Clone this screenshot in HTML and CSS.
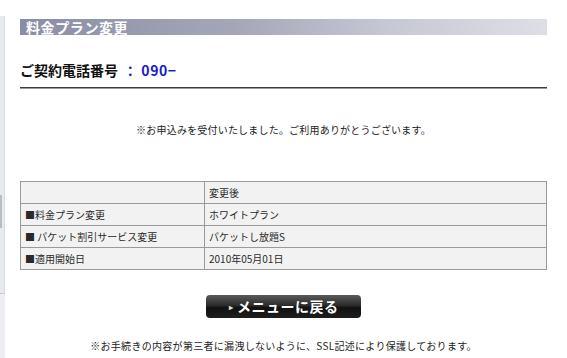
FILE: index.html
```html
<!DOCTYPE html>
<html lang="ja">
<head>
<meta charset="utf-8">
<link rel="stylesheet" href="styles.css">
</head>
<body>
<div class="page">
  <div class="side">
    <div class="side-top"></div>
    <div class="side-mark"></div>
    <div class="side-mid"></div>
    <div class="side-bottom"></div>
  </div>
  <div class="main">
    <div class="title">料金プラン変更</div>
    <div class="heading">ご契約電話番号 <span class="num">： 090−</span></div>
    <p class="msg">※お申込みを受付いたしました。ご利用ありがとうございます。</p>
    <table class="info">
      <tr><td class="c1"></td><td>変更後</td></tr>
      <tr><td class="c1">■料金プラン変更</td><td>ホワイトプラン</td></tr>
      <tr><td class="c1">■ パケット割引サービス変更</td><td>パケットし放題S</td></tr>
      <tr><td class="c1">■適用開始日</td><td>2010年05月01日</td></tr>
    </table>
    <div class="btn-row">
      <a class="btn"><span class="tri">▸</span>メニューに戻る</a>
    </div>
    <p class="foot">※お手続きの内容が第三者に漏洩しないように、SSL記述により保護しております。</p>
  </div>
</div>
</body>
</html>
```
FILE: styles.css
```css
html, body {
  margin: 0;
  padding: 0;
  background: #fff;
}
body {
  font-family: "Noto Sans CJK JP", "Noto Sans", sans-serif;
  color: #222;
}
.page {
  display: flex;
  width: 567px;
  height: 358px;
  overflow: hidden;
}
.side {
  width: 5px;
  display: flex;
  flex-direction: column;
  padding-top: 16px;
  margin-right: 15px;
}
.side-top {
  height: 179px;
  background: #e8ebee;
  border-right: 1px solid #d9dde2;
}
.side-mark {
  height: 33px;
  background: linear-gradient(to right, #b9bcc0 0, #b9bcc0 2px, #e8ebee 2px);
  border-right: 1px solid #d9dde2;
}
.side-mid {
  height: 65px;
  background: #e8ebee;
  border-right: 1px solid #d9dde2;
  border-bottom: 1px solid #c8ccd0;
}
.side-bottom {
  flex: 1;
  background: #eceef1;
}
.main {
  width: 527px;
  display: flex;
  flex-direction: column;
}
.title {
  margin-top: 19px;
  height: 16px;
  line-height: 16px;
  padding-left: 6px;
  background: linear-gradient(to right, #8b8da5 0%, #a4a6b8 40%, #c6c8d3 70%, #dedfe5 100%);
  color: #fff;
  font-size: 14px;
  font-weight: bold;
  letter-spacing: 0.6px;
}
.heading {
  margin-top: 25px;
  line-height: 20px;
  padding-bottom: 7px;
  border-bottom: 1px solid #3c3c3c;
  box-shadow: 0 1px 0 #9a9a9a;
  font-size: 14px;
  font-weight: bold;
  color: #111;
}
.num {
  color: #1a1acc;
  margin-left: 2px;
  letter-spacing: 0.5px;
}
.msg {
  margin: 35px 0 0;
  text-align: center;
  font-size: 10px;
  line-height: 14px;
  letter-spacing: 0.2px;
  color: #222;
}
.info {
  margin-top: 44px;
  width: 527px;
  border-collapse: collapse;
  background: #f2f2f2;
  font-size: 10px;
}
.info td {
  border: 1px solid #9a9a9a;
  height: 21px;
  padding: 0 0 0 4px;
  line-height: 14px;
  color: #2a2a2a;
}
.info .c1 {
  width: 179px;
}
.btn-row {
  margin-top: 25px;
  display: flex;
  justify-content: center;
}
.btn {
  width: 155px;
  height: 23px;
  border-radius: 4px;
  background: linear-gradient(to bottom, #5a5a5a 0%, #2c2c2c 45%, #111 55%, #1e1e1e 100%);
  color: #fff;
  font-size: 14px;
  font-weight: bold;
  line-height: 23px;
  display: flex;
  justify-content: center;
  align-items: center;
  letter-spacing: 0.5px;
}
.tri {
  font-size: 8px;
  margin-right: 4px;
  color: #ddd;
}
.foot {
  margin: 21px 0 0;
  text-align: center;
  font-size: 10px;
  line-height: 14px;
  letter-spacing: 0.3px;
}
```
